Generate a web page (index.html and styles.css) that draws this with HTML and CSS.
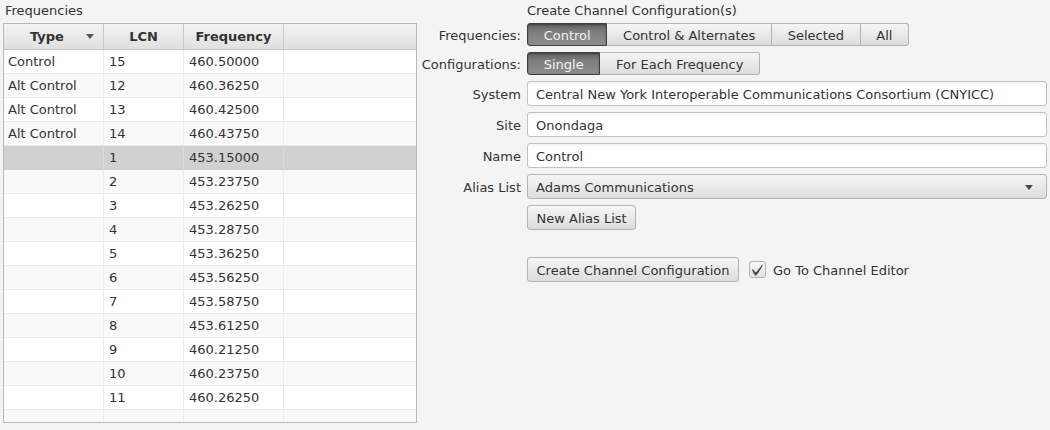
FILE: index.html
```
<!DOCTYPE html>
<html>
<head>
<meta charset="utf-8">
<link rel="stylesheet" href="styles.css">
</head>
<body>
<div class="page">
  <section class="left">
    <div class="title">Frequencies</div>
    <div class="table">
      <div class="thead">
        <div class="th th-type"><span>Type</span><svg class="sort" width="8" height="5" viewBox="0 0 8 5"><path d="M0 0H8L4 5Z"/></svg></div>
        <div class="th">LCN</div>
        <div class="th">Frequency</div>
        <div class="th th-fill"></div>
      </div>
      <div class="tbody">
        <div class="tr"><div class="td">Control</div><div class="td">15</div><div class="td">460.50000</div><div class="td"></div></div>
        <div class="tr"><div class="td">Alt Control</div><div class="td">12</div><div class="td">460.36250</div><div class="td"></div></div>
        <div class="tr"><div class="td">Alt Control</div><div class="td">13</div><div class="td">460.42500</div><div class="td"></div></div>
        <div class="tr"><div class="td">Alt Control</div><div class="td">14</div><div class="td">460.43750</div><div class="td"></div></div>
        <div class="tr sel"><div class="td"></div><div class="td">1</div><div class="td">453.15000</div><div class="td"></div></div>
        <div class="tr"><div class="td"></div><div class="td">2</div><div class="td">453.23750</div><div class="td"></div></div>
        <div class="tr"><div class="td"></div><div class="td">3</div><div class="td">453.26250</div><div class="td"></div></div>
        <div class="tr"><div class="td"></div><div class="td">4</div><div class="td">453.28750</div><div class="td"></div></div>
        <div class="tr"><div class="td"></div><div class="td">5</div><div class="td">453.36250</div><div class="td"></div></div>
        <div class="tr"><div class="td"></div><div class="td">6</div><div class="td">453.56250</div><div class="td"></div></div>
        <div class="tr"><div class="td"></div><div class="td">7</div><div class="td">453.58750</div><div class="td"></div></div>
        <div class="tr"><div class="td"></div><div class="td">8</div><div class="td">453.61250</div><div class="td"></div></div>
        <div class="tr"><div class="td"></div><div class="td">9</div><div class="td">460.21250</div><div class="td"></div></div>
        <div class="tr"><div class="td"></div><div class="td">10</div><div class="td">460.23750</div><div class="td"></div></div>
        <div class="tr"><div class="td"></div><div class="td">11</div><div class="td">460.26250</div><div class="td"></div></div>
        <div class="tr"><div class="td"></div><div class="td"></div><div class="td"></div><div class="td"></div></div>
      </div>
    </div>
  </section>

  <section class="right">
    <div class="rtitle">Create Channel Configuration(s)</div>
    <div class="form">
      <div class="lbl low">Frequencies:</div>
      <div class="seg">
        <div class="segbtn on">Control</div>
        <div class="segbtn">Control &amp; Alternates</div>
        <div class="segbtn">Selected</div>
        <div class="segbtn">All</div>
      </div>

      <div class="lbl low">Configurations:</div>
      <div class="seg">
        <div class="segbtn on">Single</div>
        <div class="segbtn">For Each Frequency</div>
      </div>

      <div class="lbl low">System</div>
      <div class="field">Central New York Interoperable Communications Consortium (CNYICC)</div>

      <div class="lbl low">Site</div>
      <div class="field">Onondaga</div>

      <div class="lbl low">Name</div>
      <div class="field">Control</div>

      <div class="lbl low">Alias List</div>
      <div class="combo"><span>Adams Communications</span><svg class="arrow" width="8" height="5" viewBox="0 0 8 5"><path d="M0 0H8L4 5Z"/></svg></div>

      <div class="lbl"></div>
      <div class="btnrow"><div class="btn">New Alias List</div></div>

      <div class="lbl"></div>
      <div></div>

      <div class="lbl"></div>
      <div class="btnrow">
        <div class="btn">Create Channel Configuration</div>
        <div class="check">
          <div class="box"><svg width="11" height="12" viewBox="-0.5 -1.2 16.7 17.6"><path d="M-0.25,6.083c0.843-0.758,4.583,4.833,5.75,4.833S14.5-1.5,15.917-0.917c1.292,0.532-8.750,17.083-10.5,17.083C3,16.167-1.083,6.833-0.25,6.083z"/></svg></div>
          <span class="checktext">Go To Channel Editor</span>
        </div>
      </div>
    </div>
  </section>
</div>
</body>
</html>
```

FILE: styles.css
```
* { box-sizing: border-box; }
html, body { margin: 0; padding: 0; }
body {
  background: #f4f4f4;
  font-family: "DejaVu Sans", "Liberation Sans", sans-serif;
  font-size: 13px;
  color: #333333;
  width: 1050px;
  height: 430px;
  overflow: hidden;
}
.page {
  display: flex;
  padding: 0 3px 0 3px;
  gap: 5px;
}
.left { width: 414px; flex: none; }
.title, .rtitle {
  height: 23px;
  line-height: 21px;
  padding-left: 2px;
  white-space: nowrap;
}
.rtitle { padding-left: 105px; }
.table {
  border: 1px solid #b8b8b8;
  height: 400px;
  background: #ffffff;
  overflow: hidden;
}
.thead, .tr {
  display: grid;
  grid-template-columns: 100px 80px 100px 1fr;
}
.thead {
  height: 26px;
  background: linear-gradient(to bottom, #f3f3f3 0%, #e0e0e0 100%);
  border-bottom: 1px solid #c4c4c4;
}
.th {
  font-weight: bold;
  display: flex;
  align-items: center;
  justify-content: center;
  border-right: 1px solid #c8c8c8;
  line-height: 24px;
}
.th-type { justify-content: flex-start; padding-left: 26px; }
.th-type .sort { margin-left: auto; margin-right: 9px; fill: #575757; }
.th-fill { border-right: none; }
.tbody { height: 372px; overflow: hidden; }
.tr { height: 24px; background: #ffffff; }
.tr:nth-child(even) { background: #f9f9f9; }
.tr.sel { background: #d1d1d1; }
.td {
  border-right: 1px solid #ececec;
  border-bottom: 1px solid #ececec;
  line-height: 23px;
  padding-left: 4px;
  white-space: nowrap;
}
.td:nth-child(2), .td:nth-child(3) { padding-left: 5px; }
.td:last-child { border-right: none; }
.tr.sel .td { border-bottom-color: #d1d1d1; border-right-color: #dadada; }

.right { flex: 1; }
.form {
  display: grid;
  grid-template-columns: 99px 1fr;
  column-gap: 6px;
  row-gap: 6px;
  grid-template-rows: 23px 23px 25px 25px 25px 25px 25px 15px 25px;
}
.lbl {
  white-space: nowrap;
  display: flex;
  align-items: center;
  justify-content: flex-end;
}
.lbl.low { padding-top: 2px; }
.seg { display: flex; }
.segbtn {
  height: 23px;
  line-height: 21px;
  padding: 1px 15.7px 0 15.7px;
  border: 1px solid #b3b3b3;
  border-left: none;
  background: linear-gradient(to bottom, #f6f6f6 0%, #e9e9e9 50%, #dddddd 100%);
  white-space: nowrap;
}
.segbtn:first-child { border-left: 1px solid #b3b3b3; border-radius: 3px 0 0 3px; }
.segbtn:last-child { border-radius: 0 3px 3px 0; }
.segbtn.on {
  background: linear-gradient(to bottom, #606060 0%, #7e7e7e 35%, #8c8c8c 100%);
  border-color: #3f3f3f;
  color: #f2f2f2;
  box-shadow: inset 0 1px 2px rgba(0,0,0,0.35);
}
.field {
  height: 25px;
  line-height: 21px;
  padding: 2px 8px 0 8px;
  border: 1px solid #c2c2c2;
  border-radius: 3px;
  background: linear-gradient(to bottom, #f2f2f2 0px, #ffffff 3px);
  white-space: nowrap;
  overflow: hidden;
}
.combo {
  height: 25px;
  line-height: 21px;
  border: 1px solid #b3b3b3;
  border-radius: 3px;
  background: linear-gradient(to bottom, #f6f6f6 0%, #e9e9e9 50%, #dddddd 100%);
  padding: 2px 13px 0 8px;
  display: flex;
  align-items: center;
}
.combo .arrow { margin-left: auto; fill: #4a4a4a; }
.btnrow { display: flex; align-items: center; }
.btn {
  height: 25px;
  line-height: 21px;
  padding: 2px 8.5px 0 8.5px;
  border: 1px solid #b3b3b3;
  border-radius: 3px;
  background: linear-gradient(to bottom, #f6f6f6 0%, #e9e9e9 50%, #dddddd 100%);
  white-space: nowrap;
}
.check { display: flex; align-items: center; margin-left: 10px; gap: 7px; }
.checktext { padding-top: 2px; }
.box {
  width: 17px;
  height: 17px;
  border: 1px solid #b3b3b3;
  border-radius: 3px;
  background: linear-gradient(to bottom, #f6f6f6 0%, #e3e3e3 100%);
  display: flex;
  align-items: center;
  justify-content: center;
}
.box svg { fill: #4d4d4d; }
```
